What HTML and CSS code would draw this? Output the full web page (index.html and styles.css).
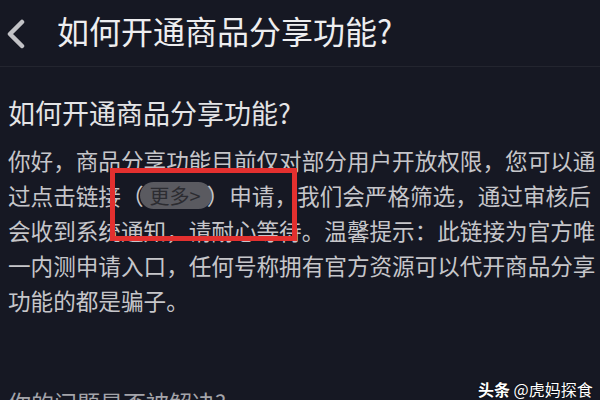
FILE: index.html
```html
<!DOCTYPE html>
<html lang="zh-CN">
<head>
    <meta charset="UTF-8">
    <meta name="viewport" content="width=device-width, initial-scale=1.0">
    <title>如何开通商品分享功能?</title>
    <link rel="stylesheet" href="styles.css">
</head>
<body>
    <div class="page">
        <div class="topbar">
            <svg class="back" width="20" height="30" viewBox="0 0 20 30">
                <polyline points="16,3 4,15 16,27" fill="none" stroke="#c2c2c6" stroke-width="4.5" stroke-linecap="round" stroke-linejoin="round"/>
            </svg>
            <div class="topbar-title">如何开通商品分享功能?</div>
        </div>

        <div class="content">
            <h2>如何开通商品分享功能?</h2>
            <div class="answer">
                <div class="line">你好，商品分享功能目前仅对部分用户开放权限，您可以通</div>
                <div class="line">过点击链接（<span class="more">更多&gt;</span>）申请，我们会严格筛选，通过审核后</div>
                <div class="line">会收到系统通知，请耐心等待。温馨提示：此链接为官方唯</div>
                <div class="line">一内测申请入口，任何号称拥有官方资源可以代开商品分享</div>
                <div class="line">功能的都是骗子。</div>
            </div>
            <div class="feedback">你的问题是否被解决?</div>
        </div>

        <!-- annotation box drawn over the screenshot -->
        <div class="mark"></div>
        <div class="watermark"><b>头条</b> @虎妈探食</div>
    </div>
</body>
</html>
```

FILE: styles.css
```css
body {
    margin: 0;
    background-color: #161823;
    font-family: "Noto Sans CJK SC", "Noto Sans", sans-serif;
}
.page {
    position: relative;
    width: 600px;
    height: 400px;
    overflow: hidden;
}
.topbar {
    display: flex;
    align-items: center;
    height: 66px;
    padding-left: 6px;
    border-bottom: 1px solid #23252f;
}
.back {
    flex: none;
    margin-top: 2px;
}
.topbar-title {
    margin-left: 31px;
    padding-bottom: 6px;
    font-size: 32px;
    color: #eeeef0;
    white-space: nowrap;
}
.content {
    padding-left: 8px;
}
h2 {
    margin: 28px 0 0;
    font-size: 27px;
    font-weight: normal;
    line-height: 36px;
    color: #e4e4e6;
    white-space: nowrap;
}
.answer {
    margin-top: 12px;
    font-size: 22.6px;
    line-height: 35px;
    color: #c6c6ca;
}
.line {
    white-space: nowrap;
}
.more {
    display: inline-block;
    height: 27px;
    line-height: 27px;
    padding: 0 11px 0 10px;
    margin: 0 -5px 0 -4px;
    border-radius: 14px;
    background-color: #5a5a60;
    color: #2c2c31;
    font-size: 20px;
    vertical-align: 1px;
}
.feedback {
    margin-top: 67px;
    font-size: 23px;
    line-height: 35px;
    color: #a4a4aa;
    white-space: nowrap;
}
.mark {
    position: absolute;
    left: 110px;
    top: 168px;
    width: 187px;
    height: 73px;
    box-sizing: border-box;
    border: 5px solid #e3302f;
}
.watermark {
    position: absolute;
    left: 478px;
    top: 380px;
    font-size: 16px;
    line-height: 18px;
    color: #ffffff;
    text-shadow: 0 0 2px rgba(0, 0, 0, 0.8);
    white-space: nowrap;
}
.watermark b {
    font-weight: bold;
}
```
